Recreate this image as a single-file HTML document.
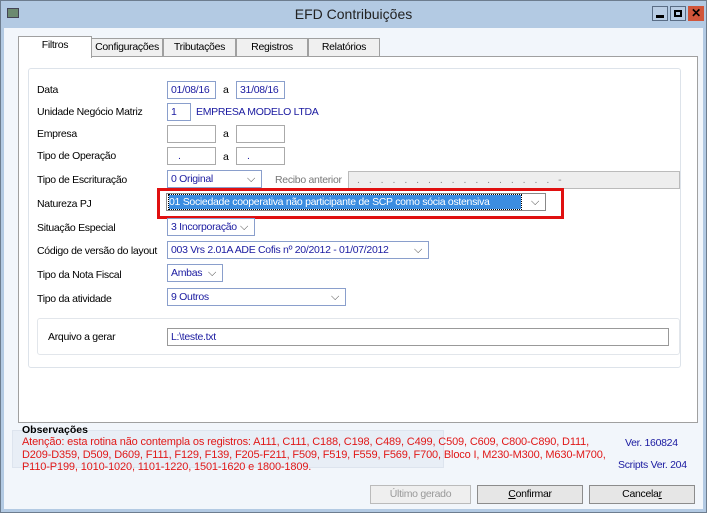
<!DOCTYPE html><html><head><style>
*{box-sizing:border-box;margin:0;padding:0}
body{width:707px;height:513px;overflow:hidden;background:#fff;font-family:"Liberation Sans",sans-serif;font-size:10.5px;letter-spacing:-0.3px;color:#000;position:relative}
.a{position:absolute;white-space:nowrap}
.win{left:0;top:0;width:707px;height:513px;background:#b3cae3;border:1px solid #6d7d8f}
.body{left:4px;top:28px;width:699px;height:481px;background:#f2f6fb}
.tab{top:38px;height:19px;border:1px solid #a0a0a0;border-bottom:none;background:#f0f0f0;text-align:center;line-height:17px}
.panel{left:18px;top:56px;width:680px;height:367px;background:#fff;border:1px solid #a0a0a0}
.grp{border:1px solid #dde3ea;border-radius:3px;background:#fff}
.in{height:18px;border:1px solid #8a9fcc;background:#fff;color:#1a1aa0;padding-left:3px;line-height:16px;overflow:hidden}
.sel::after{content:"⌵";position:absolute;right:6px;top:0;color:#444;font-size:11px}
.btn{top:485px;height:19px;border:1px solid #8c8c8c;background:#e6e6e6;text-align:center;line-height:17px}
</style></head><body>
<div class="a win"></div>
<div class="a" style="left:7px;top:8px;width:12px;height:10px;background:#6c8a70;border:1px solid #445"></div>
<div class="a" style="left:0;width:707px;top:6px;text-align:center;font-size:14px;letter-spacing:0;color:#222">EFD Contribuições</div>
<div class="a" style="left:652px;top:6px;width:16px;height:15px;border:1px solid #5a6d85;background:#b9cde4"><div class="a" style="left:3px;top:8px;width:8px;height:3px;background:#000"></div></div>
<div class="a" style="left:670px;top:6px;width:16px;height:15px;border:1px solid #5a6d85;background:#b9cde4"><div class="a" style="left:3px;top:3px;width:8px;height:7px;border:2px solid #000"></div></div>
<div class="a" style="left:688px;top:6px;width:16px;height:15px;background:#d0553a;color:#000;font-weight:bold;text-align:center;line-height:14px;font-size:12px">✕</div>
<div class="a body"></div>
<div class="a tab" style="left:91px;width:72px">Configurações</div>
<div class="a tab" style="left:163px;width:73px">Tributações</div>
<div class="a tab" style="left:236px;width:72px">Registros</div>
<div class="a tab" style="left:308px;width:72px">Relatórios</div>
<div class="a panel"></div>
<div class="a tab" style="left:18px;top:36px;width:74px;height:22px;background:#fff;z-index:2">Filtros</div>
<div class="a grp" style="left:28px;top:68px;width:653px;height:300px"></div>

<div class="a" style="left:37px;top:84px">Data</div>
<div class="a in" style="left:167px;top:81px;width:49px">01/08/16</div>
<div class="a" style="left:223px;top:84px">a</div>
<div class="a in" style="left:236px;top:81px;width:49px">31/08/16</div>

<div class="a" style="left:37px;top:106px">Unidade Negócio Matriz</div>
<div class="a in" style="left:167px;top:103px;width:24px">1</div>
<div class="a" style="left:196px;top:106px;color:#1a1aa0">EMPRESA MODELO LTDA</div>

<div class="a" style="left:37px;top:128px">Empresa</div>
<div class="a in" style="left:167px;top:125px;width:49px;border-color:#aaa"></div>
<div class="a" style="left:223px;top:128px">a</div>
<div class="a in" style="left:236px;top:125px;width:49px;border-color:#aaa"></div>

<div class="a" style="left:37px;top:150px">Tipo de Operação</div>
<div class="a in" style="left:167px;top:147px;width:49px;border-color:#aaa;padding-left:10px">.</div>
<div class="a" style="left:223px;top:151px">a</div>
<div class="a in" style="left:236px;top:147px;width:49px;border-color:#aaa;padding-left:10px">.</div>

<div class="a" style="left:37px;top:174px">Tipo de Escrituração</div>
<div class="a in sel" style="left:167px;top:170px;width:95px">0 Original</div>
<div class="a" style="left:275px;top:174px;color:#777">Recibo anterior</div>
<div class="a in" style="left:348px;top:171px;width:332px;background:#eee;border-color:#bbb;color:#888;letter-spacing:3px;padding-left:8px">. . . . . . . . . . . . . . . . . -</div>

<div class="a" style="left:37px;top:198px">Natureza PJ</div>
<div class="a" style="left:157px;top:188px;width:407px;height:31px;border:3px solid #e01010"></div>
<div class="a in sel" style="left:166px;top:193px;width:380px;border-color:#888;padding-left:2px"><span style="background:#3c8de0;color:#fff;outline:1px dotted #000;display:inline-block;width:352px;height:14px;line-height:14px;margin-top:1px">01 Sociedade cooperativa não participante de SCP como sócia ostensiva</span></div>

<div class="a" style="left:37px;top:222px">Situação Especial</div>
<div class="a in sel" style="left:167px;top:218px;width:88px;padding-right:14px">3 Incorporação</div>

<div class="a" style="left:37px;top:245px">Código de versão do layout</div>
<div class="a in sel" style="left:167px;top:241px;width:262px">003 Vrs 2.01A ADE Cofis nº 20/2012 - 01/07/2012</div>

<div class="a" style="left:37px;top:269px">Tipo da Nota Fiscal</div>
<div class="a in sel" style="left:167px;top:264px;width:56px">Ambas</div>

<div class="a" style="left:37px;top:293px">Tipo da atividade</div>
<div class="a in sel" style="left:167px;top:288px;width:179px">9 Outros</div>

<div class="a grp" style="left:37px;top:318px;width:643px;height:37px;border-color:#e2e6eb"></div>
<div class="a" style="left:48px;top:331px">Arquivo a gerar</div>
<div class="a in" style="left:167px;top:328px;width:502px;border-color:#999">L:\teste.txt</div>

<div class="a" style="left:12px;top:430px;width:432px;height:38px;background:#e8eef6;border:1px solid #dde4ee"></div>
<div class="a" style="left:22px;top:424px;font-weight:bold;letter-spacing:0">Observações</div>
<div class="a" style="left:22px;top:436px;color:#e01818;line-height:12.5px;font-size:11px;letter-spacing:-0.15px">Atenção: esta rotina não contempla os registros: A111, C111, C188, C198, C489, C499, C509, C609, C800-C890, D111,<br>D209-D359, D509, D609, F111, F129, F139, F205-F211, F509, F519, F559, F569, F700, Bloco I, M230-M300, M630-M700,<br>P110-P199, 1010-1020, 1101-1220, 1501-1620 e 1800-1809.</div>
<div class="a" style="left:625px;top:437px;color:#1a1aa0">Ver. 160824</div>
<div class="a" style="left:618px;top:459px;color:#1a1aa0">Scripts Ver. 204</div>

<div class="a btn" style="left:370px;width:101px;color:#999;border-color:#bbb;background:#efefef">Último gerado</div>
<div class="a btn" style="left:477px;width:106px"><u>C</u>onfirmar</div>
<div class="a btn" style="left:589px;width:106px">Cancela<u>r</u></div>
</body></html>
